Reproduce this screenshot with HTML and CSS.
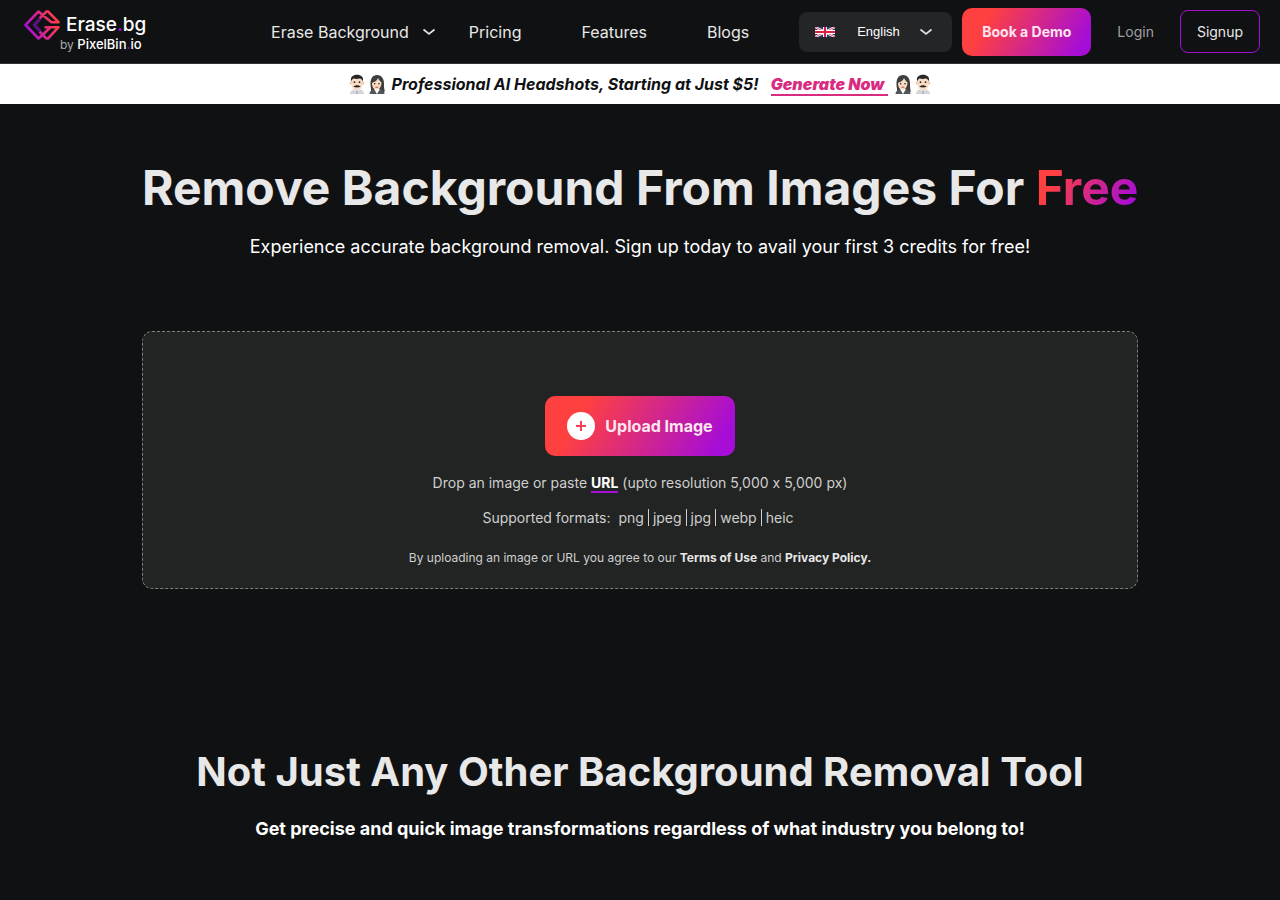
FILE: index.html
```html
<!DOCTYPE html>
<html lang="en">
<head>
    <meta charset="UTF-8">
    <meta name="viewport" content="width=device-width, initial-scale=1.0">
    <title>Erase.bg</title>
    <link rel="stylesheet" href="styles.css">
</head>
<body>

    <header class="header">
        <a href="#" class="logo">
            <svg class="logo-mark" width="36" height="30" viewBox="0 0 36 30" fill="none" aria-hidden="true">
                <defs>
                    <linearGradient id="markGradient" x1="2" y1="20" x2="34" y2="8" gradientUnits="userSpaceOnUse">
                        <stop offset="0" stop-color="#a60dd6"/>
                        <stop offset="0.75" stop-color="#f03560"/>
                        <stop offset="1" stop-color="#ff4040"/>
                    </linearGradient>
                </defs>
                <g stroke="url(#markGradient)" stroke-width="2.6" stroke-linejoin="round">
                    <path d="M18.5 5 L14.5 1.5 L1.5 15 L14.5 28.5 L18.5 25"/>
                    <path d="M15.5 8.5 L22.5 1.5 H24 L34.5 12.2 H27.5 L18.5 5"/>
                    <path d="M20.5 17.2 H34.5 L24 28.5 H22.5 L18.5 25 L26.5 17.2 M15.5 21.5 L20.5 26.5"/>
                </g>
                <path d="M16 9 L10.5 15 L16 21" stroke="#5c1480" stroke-width="3.2"/>
            </svg>
            <span class="logo-text">
                <span class="logo-name">Erase<i>.</i>bg</span>
                <span class="logo-by"><small>by</small> PixelBin<i>.</i>io</span>
            </span>
        </a>

        <nav class="nav">
            <a href="#" class="nav-drop">Erase Background
                <svg width="14" height="8" viewBox="0 0 14 8" fill="none" aria-hidden="true"><path d="M1.5 1.5 L7 6 L12.5 1.5" stroke="#e0e0e0" stroke-width="1.7"/></svg>
            </a>
            <a href="#">Pricing</a>
            <a href="#">Features</a>
            <a href="#">Blogs</a>
        </nav>

        <div class="language">
            <svg width="20" height="10" viewBox="0 0 20 10" aria-hidden="true">
                <path fill="#2b3a78" d="M0 0h20v10H0z"/>
                <path d="M0 0 L20 10 M20 0 L0 10" stroke="#fff" stroke-width="2.4"/>
                <path d="M0 0 L20 10 M20 0 L0 10" stroke="#d22f4b" stroke-width="0.8"/>
                <path d="M10 0 V10 M0 5 H20" stroke="#fff" stroke-width="4"/>
                <path d="M10 0 V10 M0 5 H20" stroke="#d8203f" stroke-width="2.2"/>
            </svg>
            <select aria-label="Language">
                <option>English</option>
            </select>
            <svg width="14" height="8" viewBox="0 0 14 8" fill="none" aria-hidden="true"><path d="M1.5 1.5 L7 6 L12.5 1.5" stroke="#e0e0e0" stroke-width="1.7"/></svg>
        </div>

        <button class="demo">Book a Demo</button>
        <a href="#" class="login">Login</a>
        <button class="signup">Signup</button>
    </header>

    <div class="banner">
        <svg width="0" height="0" class="defs" aria-hidden="true">
            <symbol id="man" viewBox="0 0 18 20">
                <path fill="#d3d6da" d="M2 20 C2 16.5 5 15 9 15 C13 15 16 16.5 16 20 Z"/>
                <path fill="#f1f2f4" d="M6 15 H12 L9 19 Z"/>
                <path fill="#a0a5aa" d="M8.3 16.5 H9.7 V20 H8.3 Z"/>
                <circle cx="3.2" cy="9" r="1.6" fill="#efc2a2"/>
                <circle cx="14.8" cy="9" r="1.6" fill="#efc2a2"/>
                <path fill="#f9dcc4" d="M3.5 5 H14.5 V10 C14.5 14 12 16 9 16 C6 16 3.5 14 3.5 10 Z"/>
                <path fill="#2a2625" d="M3.2 7.5 C2 3 5 0.8 9 0.8 C13 0.8 16 3 14.8 7.5 C14 6 13.5 5 12 4.6 C9 5.4 7 5 5.5 4.6 C4.5 5 4 6 3.2 7.5 Z"/>
                <circle cx="6.5" cy="8.2" r="0.9" fill="#2a2625"/>
                <circle cx="11.5" cy="8.2" r="0.9" fill="#2a2625"/>
                <path fill="#2a2625" d="M5.5 12.8 C7 10.8 11 10.8 12.5 12.8 C11 13.6 7 13.6 5.5 12.8 Z"/>
            </symbol>
            <symbol id="woman" viewBox="0 0 18 20">
                <path fill="#403d3d" d="M3 15 C1 4 5 1 9 1 C14 1 16.5 5 16 12 C16 15 17 16 16.5 18 H3 Z"/>
                <path fill="#50565c" d="M1.5 20 C1.5 16.5 5 15 9 15 C13 15 16.5 16.5 16.5 20 Z"/>
                <path fill="#fff" d="M6 15 H12 L9 20 Z"/>
                <path fill="#f9dcc4" d="M4 9 C7 8 9.5 6 10 4 C11 6 12.5 7.5 13.5 8.5 C13.5 13 11 15.8 8.7 15.8 C6 15.8 4 13 4 9 Z"/>
                <circle cx="6.7" cy="9.8" r="0.8" fill="#2a2625"/>
                <circle cx="11" cy="9.8" r="0.8" fill="#2a2625"/>
                <path d="M7.3 13.2 H10.3" stroke="#c5524e"/>
            </symbol>
        </svg>
        <span class="faces">
            <svg width="18" height="20" aria-hidden="true"><use href="#man"/></svg>
            <svg width="18" height="20" aria-hidden="true"><use href="#woman"/></svg>
        </span>
        <span class="banner-text">Professional AI Headshots, Starting at Just $5!</span>
        <a href="#">Generate Now</a>
        <span class="faces">
            <svg width="18" height="20" aria-hidden="true"><use href="#woman"/></svg>
            <svg width="18" height="20" aria-hidden="true"><use href="#man"/></svg>
        </span>
    </div>

    <main>
        <section class="hero">
            <h1>Remove Background From Images For <span>Free</span></h1>
            <p class="intro">Experience accurate background removal. Sign up today to avail your first 3 credits for free!</p>

            <div class="upload">
                <button class="upload-button">
                    <svg width="28" height="28" viewBox="0 0 28 28" aria-hidden="true">
                        <circle cx="14" cy="14" r="14" fill="#fff"/>
                        <path d="M14 9 V19 M9 14 H19" stroke="#f0405c" stroke-width="2"/>
                    </svg>
                    Upload Image
                </button>
                <p class="drop">Drop an image or paste <a href="#">URL</a> (upto resolution 5,000 x 5,000 px)</p>
                <p class="formats">Supported formats:
                    <span>png</span><span>jpeg</span><span>jpg</span><span>webp</span><span>heic</span>
                </p>
                <p class="terms">By uploading an image or URL you agree to our <a href="#">Terms of Use</a> and <a href="#">Privacy Policy.</a></p>
            </div>
        </section>

        <section class="about">
            <h2>Not Just Any Other Background Removal Tool</h2>
            <p>Get precise and quick image transformations regardless of what industry you belong to!</p>
        </section>
    </main>

</body>
</html>
```
FILE: styles.css
```css
* {
    box-sizing: border-box;
}

body {
    margin: 0;
    background-color: #101113;
    color: #e8e8e8;
    font-family: Inter, sans-serif;
}

a {
    color: inherit;
    text-decoration: none;
}

button {
    font-family: inherit;
    cursor: pointer;
}

h1, h2, p {
    margin: 0;
}

/* header */

.header {
    display: flex;
    align-items: center;
    height: 64px;
    padding: 0 20px 0 24px;
    border-bottom: 1px solid #333;
}

.logo {
    display: flex;
    align-items: flex-start;
    padding-bottom: 3px;
    color: #fff;
}

.logo-text {
    display: flex;
    flex-direction: column;
}

.logo-name {
    padding: 2px 0 0 6px;
    font-size: 19px;
    font-weight: 500;
    line-height: 26px;
}

.logo-by {
    font-size: 13px;
    font-weight: 500;
    line-height: 12px;
}

.logo-by small {
    font-size: 12px;
    font-weight: 400;
    color: #aaa;
}

.logo i {
    color: #a60dd6;
    font-style: normal;
}

.nav {
    display: flex;
    gap: 60px;
    margin-left: auto;
    margin-right: 50px;
    font-size: 16px;
}

.nav-drop {
    display: flex;
    align-items: center;
    gap: 13px;
    margin-right: -27px;
}

.language {
    display: flex;
    align-items: center;
    width: 153px;
    height: 40px;
    padding: 0 19px 0 16px;
    border-radius: 8px;
    background-color: #242527;
}

.language select {
    flex: 1;
    appearance: none;
    margin-left: 22px;
    border: none;
    background: none;
    color: #fff;
    font: 13px "Liberation Sans", sans-serif;
}

.demo,
.upload-button {
    border: none;
    border-radius: 10px;
    background: linear-gradient(120deg, #ff4040 20%, #a60dd6 90%);
    color: #ffe5ee;
    font-weight: 700;
}

.demo {
    height: 48px;
    margin-left: 10px;
    padding: 0 20px;
    font-size: 14px;
}

.login {
    padding: 0 26px;
    color: #a0a0a0;
    font-size: 14px;
}

.signup {
    height: 43px;
    padding: 0 16px;
    border: 1px solid #a60dd6;
    border-radius: 8px;
    background: none;
    color: #e8e8e8;
    font-size: 14px;
}

/* banner */

.banner {
    display: flex;
    align-items: center;
    justify-content: center;
    height: 40px;
    background-color: #fff;
    color: #101113;
    font-size: 16px;
    font-style: italic;
    font-weight: 700;
}

.defs {
    position: absolute;
}

.faces {
    display: flex;
    gap: 2px;
}

.banner-text {
    margin: 0 12px 0 6px;
}

.banner a {
    margin-right: 6px;
    padding: 2px 4px 0 0;
    border-bottom: 2px solid #d92b7f;
    color: #d92b7f;
    font-weight: 900;
}

/* hero */

.hero {
    max-width: 996px;
    margin: 0 auto;
    padding-top: 54px;
    text-align: center;
}

h1 {
    font-size: 48px;
    font-weight: 700;
    line-height: 60px;
    white-space: nowrap;
}

h1 span {
    background: linear-gradient(120deg, #ff4040 20%, #a60dd6 90%);
    background-clip: text;
    -webkit-background-clip: text;
    color: transparent;
}

.intro {
    margin-top: 14px;
    color: #fff;
    font-size: 18px;
    line-height: 30px;
}

.upload {
    display: flex;
    flex-direction: column;
    align-items: center;
    margin-top: 69px;
    padding: 64px 20px 20px;
    border: 1px dashed #808080;
    border-radius: 10px;
    background-color: #222423;
    color: #cfcfcf;
}

.upload-button {
    display: flex;
    align-items: center;
    gap: 10px;
    height: 60px;
    padding: 0 22px;
    font-size: 16px;
}

.drop,
.formats {
    font-size: 14px;
    font-variant-ligatures: no-contextual;
    line-height: 20px;
}

.drop {
    margin-top: 17px;
}

.drop a {
    border-bottom: 2px solid #a60dd6;
    color: #fff;
    font-weight: 700;
}

.formats {
    margin-top: 15px;
}

.formats span {
    padding: 0 4px;
}

.formats span + span {
    border-left: 1px solid #cfcfcf;
}

.terms {
    margin-top: 20px;
    font-size: 12px;
    line-height: 20px;
}

.terms a {
    color: #e8e8e8;
    font-weight: 700;
}

/* about */

.about {
    padding: 157px 20px 52px;
    text-align: center;
}

h2 {
    font-size: 40px;
    font-weight: 700;
    line-height: 52px;
}

.about p {
    margin-top: 16px;
    color: #fff;
    font-size: 18px;
    font-weight: 700;
    line-height: 30px;
}
```
